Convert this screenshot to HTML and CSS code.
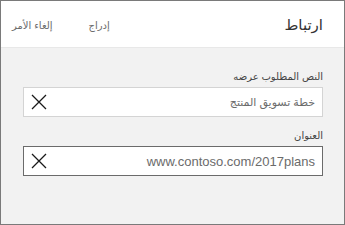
FILE: index.html
```html
<!DOCTYPE html>
<html lang="ar" dir="rtl">
<head>
<meta charset="utf-8">
<link rel="stylesheet" href="styles.css">
</head>
<body>
<div class="panel">
  <div class="header">
    <div class="title">ارتباط</div>
    <div class="actions">
      <span class="action">إدراج</span>
      <span class="action">إلغاء الأمر</span>
    </div>
  </div>
  <div class="body">
    <div class="field">
      <div class="label">النص المطلوب عرضه</div>
      <div class="input">
        <span class="value">خطة تسويق المنتج</span>
        <svg class="clear" width="16" height="16" viewBox="0 0 16 16"><path d="M1 1L15 15M15 1L1 15" stroke="#1a1a1a" stroke-width="1.3" fill="none"/></svg>
      </div>
    </div>
    <div class="field">
      <div class="label">العنوان</div>
      <div class="input focused">
        <span class="value url">www.contoso.com/2017plans</span>
        <svg class="clear" width="16" height="16" viewBox="0 0 16 16"><path d="M1 1L15 15M15 1L1 15" stroke="#1a1a1a" stroke-width="1.3" fill="none"/></svg>
      </div>
    </div>
  </div>
</div>
</body>
</html>
```
FILE: styles.css
```css
html, body {
  margin: 0;
  padding: 0;
}
body {
  font-family: "Liberation Sans", "DejaVu Sans", sans-serif;
  direction: rtl;
}
.panel {
  width: 345px;
  height: 225px;
  box-sizing: border-box;
  border: 1px solid #7a7a7a;
  background: #f2f2f2;
  display: flex;
  flex-direction: column;
}
.header {
  height: 46px;
  flex: none;
  background: #ffffff;
  border-bottom: 1px solid #e8e8e8;
  display: flex;
  align-items: center;
  padding: 0 21px 0 11px;
}
.title {
  font-size: 15px;
  color: #333333;
  padding-top: 2px;
}
.actions {
  margin-right: auto;
  display: flex;
  gap: 36px;
  align-items: center;
}
.action {
  font-size: 10px;
  color: #6b6b6b;
  padding-top: 3px;
}
.body {
  padding: 22px 21px 0 22px;
  display: flex;
  flex-direction: column;
  gap: 12px;
}
.label {
  font-size: 10px;
  color: #444444;
  line-height: 14px;
  margin-bottom: 3px;
}
.input {
  height: 30px;
  box-sizing: border-box;
  background: #ffffff;
  border: 1px solid #d4d4d4;
  display: flex;
  align-items: center;
  padding: 0 7px 0 7px;
}
.input.focused {
  border-color: #6b6b6b;
}
.value {
  font-size: 11px;
  color: #6b6b6b;
}
.value.url {
  font-size: 13px;
  direction: ltr;
}
.clear {
  margin-right: auto;
  display: block;
}
```
